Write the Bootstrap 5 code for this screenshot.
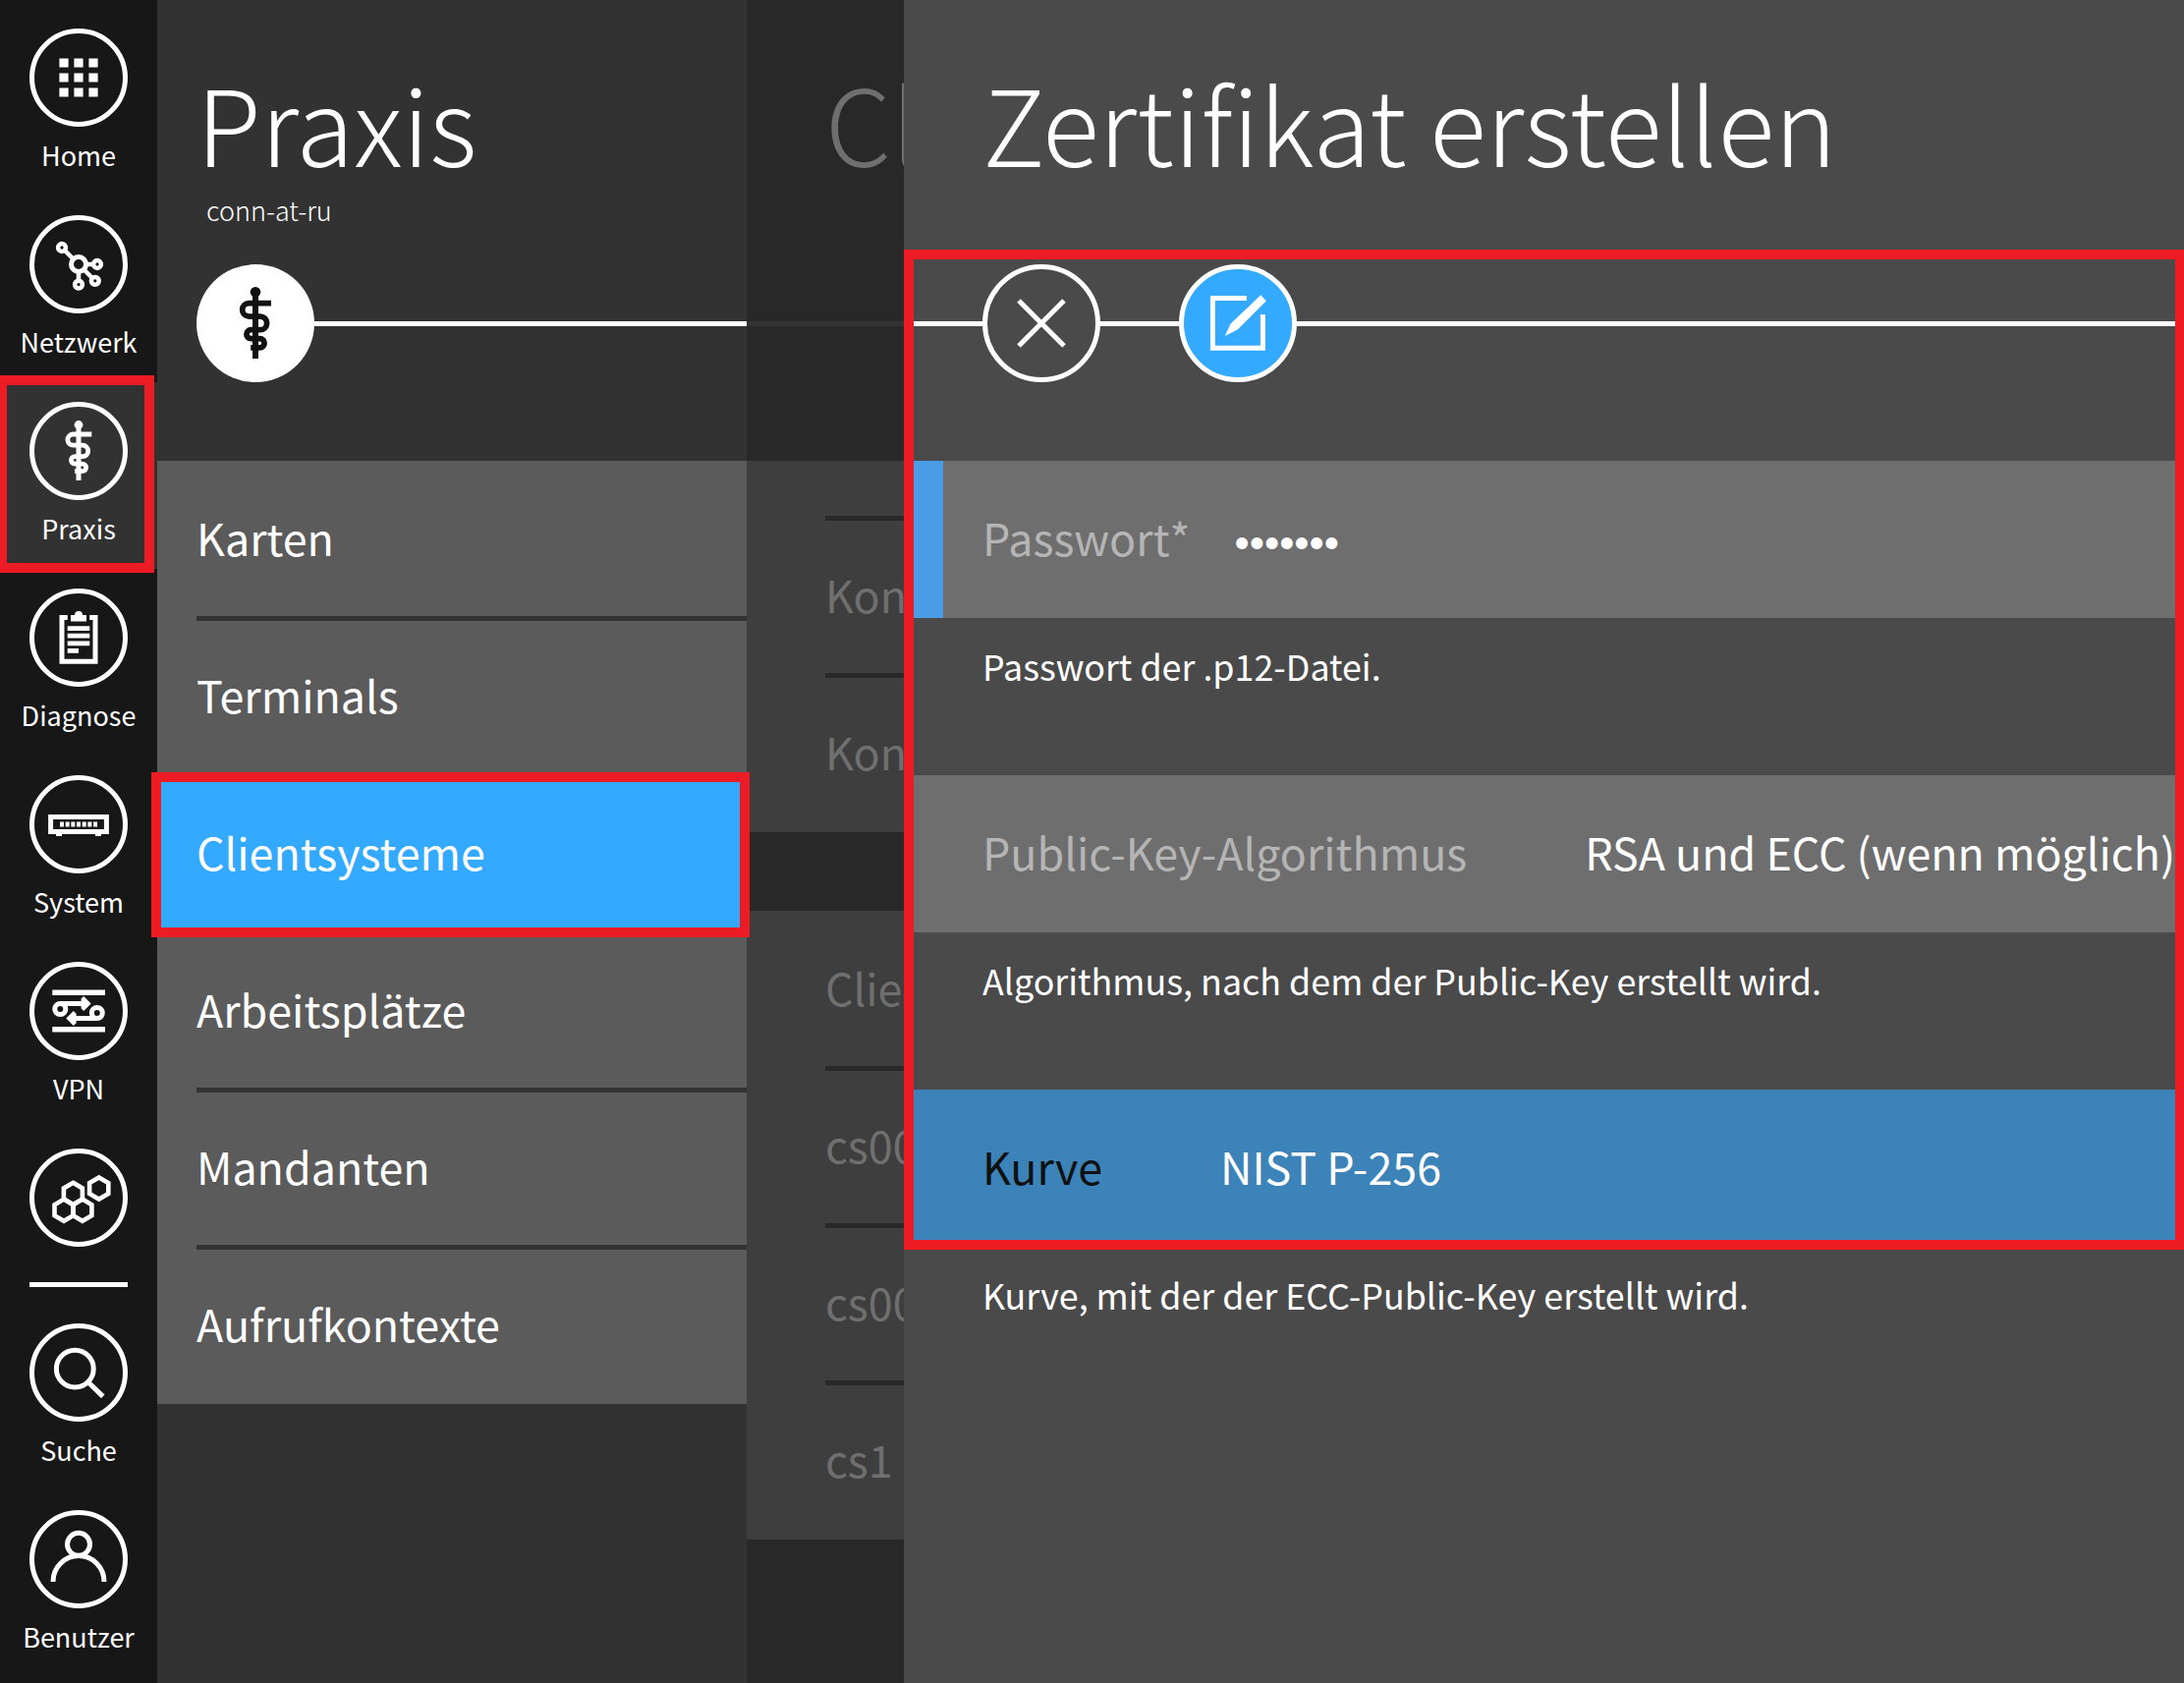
<!DOCTYPE html>
<html lang="de">
<head>
<meta charset="utf-8">
<meta name="viewport" content="width=device-width, initial-scale=1">
<title>Praxis – Zertifikat erstellen</title>
<link href="https://cdn.jsdelivr.net/npm/bootstrap@5.3.0/dist/css/bootstrap.min.css" rel="stylesheet">
<style>
  :root { --ink: #323232; --accent: #33a9ff; --mark-red: #ed1c24; }
  body { font-family: "Noto Sans CJK SC", "Noto Sans", sans-serif; background: #4a4a4a; color: #fff; font-variant-ligatures: none; }
  a { color: inherit; text-decoration: none; }
  .shell { width: 2223px; height: 1713px; }

  .side { width: 160px; padding-top: 9px; background: #171717; }
  .side-item { height: 190px; padding-top: 20px; }
  .side-item.active { background: var(--ink); }
  .side-item.nolabel { height: 156px; }
  .side-item svg { width: 100px; height: 100px; flex: none; }
  .side-label { font-size: 27px; line-height: 40px; margin-top: 9px; white-space: nowrap; }
  .side-rule { width: 100px; height: 5px; margin: 0 30px 17px; background: #fff; }
  .ico { fill: none; stroke: #fff; stroke-width: 5; }
  .ico .solid { fill: #fff; stroke: none; }

  .pane { height: 1713px; }
  .pane-main { width: 600px; background: var(--ink); }
  .pane-back { width: 160px; background: #282828; color: #6f6f6f; }
  .pane-form { background: #4a4a4a; min-width: 0; }
  .pane-head { height: 469px; padding-top: 64px; }
  .pane-title { font-size: 107.2px; line-height: 120px; font-weight: 200; margin: 0; padding-left: 80px; white-space: nowrap; }
  .pane-main .pane-title { padding-left: 40px; }
  .pane-sub { font-size: 27px; line-height: 40px; height: 40px; margin-top: 10px; padding-left: 50px; font-weight: 200; }
  .tools { height: 120px; margin-top: 35px; }
  .tools svg { width: 120px; height: 120px; flex: none; }
  .pane-badge { margin-left: 40px; color: #111; }
  .tool-line { height: 5px; margin-top: 1px; background: #fff; }
  .tool-gap { width: 80px; }

  .entry { height: 160px; font-size: 44.8px; line-height: 155px; white-space: nowrap; }
  .entries { background: #5b5b5b; }
  .entries .entry { padding-left: 40px; }
  .entries .entry.active { background: var(--accent); }
  .entry-rule { height: 5px; margin: -2px 0 -3px 40px; background: var(--ink); position: relative; }
  .pane-back .entries { background: #3e3e3e; }
  .pane-back .entries .entry { padding-left: 80px; }
  .pane-back .entry-rule { margin-left: 80px; background: #282828; }
  .pane-back .tool-line { background: #333; }
  .scrolled { padding-top: 58px; margin-bottom: 80px; }

  .field { background: #6e6e6e; border-left: 40px solid #6e6e6e; padding-left: 40px; color: #b5b5b5; }
  .field.required { border-left-color: #4b9ce4; }
  .field.selected { background: #3b83b8; border-left-color: #3b83b8; color: #111; }
  .field-value { color: #fff; margin-left: 120px; }
  .dots { font-family: "Liberation Sans", sans-serif; font-size: 43.5px; line-height: 169px; margin-left: 45px; }
  .hint { height: 160px; padding: 24px 0 0 80px; font-size: 35.85px; line-height: 48px; white-space: nowrap; }

  /* callout frames laid over the interface */
  .frame { position: absolute; border: 10px solid var(--mark-red); pointer-events: none; }
  .frame-nav { left: -3px; top: 382px; width: 160px; height: 201px; }
  .frame-entry { left: 154px; top: 786px; width: 609px; height: 168px; }
  .frame-form { left: 920px; top: 254px; width: 1303px; height: 1018px; border-right-width: 9px; }
</style>
<script src="https://cdn.jsdelivr.net/npm/bootstrap@5.3.0/dist/js/bootstrap.bundle.min.js"></script>
</head>
<body>
<svg class="d-none">
  <symbol id="staff" viewBox="0 0 100 100">
    <circle cx="50" cy="23.5" r="4.4" fill="currentColor" stroke="none"/>
    <path d="M50 23V80" fill="none" stroke="currentColor" stroke-width="5"/>
    <path d="M63.3 33H44.5a5.6 5.6 0 0 0 0 11.2H54a5.7 5.7 0 0 1 0 11.4H46.2a3.75 3.75 0 0 0 0 7.5H53.8a3.8 3.8 0 0 1 0 7.6H46" fill="none" stroke="currentColor" stroke-width="4.8"/>
  </symbol>
</svg>
<div class="shell d-flex position-relative overflow-hidden">

  <nav class="side d-flex flex-column flex-shrink-0">
    <a href="#" class="side-item d-flex flex-column align-items-center">
      <svg class="ico" viewBox="0 0 100 100"><circle cx="50" cy="50" r="47.5"/><path class="solid" d="M30.4 30.4h9.2v9.2h-9.2zM45.4 30.4h9.2v9.2h-9.2zM60.4 30.4h9.2v9.2h-9.2zM30.4 45.4h9.2v9.2h-9.2zM45.4 45.4h9.2v9.2h-9.2zM60.4 45.4h9.2v9.2h-9.2zM30.4 60.4h9.2v9.2h-9.2zM45.4 60.4h9.2v9.2h-9.2zM60.4 60.4h9.2v9.2h-9.2z"/></svg>
      <span class="side-label">Home</span>
    </a>
    <a href="#" class="side-item d-flex flex-column align-items-center">
      <svg class="ico" viewBox="0 0 100 100"><circle cx="50" cy="50" r="47.5"/><circle cx="50" cy="50" r="7.5"/><g stroke-width="4.5"><circle cx="33" cy="33" r="3.9"/><circle cx="69" cy="50" r="3.9"/><circle cx="66.8" cy="66.8" r="3.9"/><circle cx="50" cy="70.6" r="3.9"/><path d="M36 36l8.5 8.5M57 50h8M55.5 55.5l8 8M50 57v10"/></g></svg>
      <span class="side-label">Netzwerk</span>
    </a>
    <a href="#" class="side-item active d-flex flex-column align-items-center">
      <svg class="ico" viewBox="0 0 100 100"><circle cx="50" cy="50" r="47.5"/><use href="#staff" width="100" height="100"/></svg>
      <span class="side-label">Praxis</span>
    </a>
    <a href="#" class="side-item d-flex flex-column align-items-center">
      <svg class="ico" viewBox="0 0 100 100"><circle cx="50" cy="50" r="47.5"/><path d="M38.8 29.5H33V74.2H67V29.5H61.2"/><path class="solid" d="M42 27h4a4 4 0 0 1 8 0h4v6.4H42z"/><path stroke-width="4.8" d="M38.7 40.7H61.3M38.7 48.2H61.3M38.7 55.8H61.3M38.7 63.3H50"/></svg>
      <span class="side-label">Diagnose</span>
    </a>
    <a href="#" class="side-item d-flex flex-column align-items-center">
      <svg class="ico" viewBox="0 0 100 100"><circle cx="50" cy="50" r="47.5"/><path d="M21.6 42.5H78.4V57.5H21.6z"/><path stroke-dasharray="4 1.67" d="M31 50H69.3"/><path class="solid" d="M27 60h6v2h-6zM67 60h6v2h-6z"/></svg>
      <span class="side-label">System</span>
    </a>
    <a href="#" class="side-item d-flex flex-column align-items-center">
      <svg class="ico" viewBox="0 0 100 100"><circle cx="50" cy="50" r="47.5"/><path d="M23.3 31.2H77M23.3 68.8H77" stroke-width="5.4"/><circle cx="31.3" cy="48" r="5.5"/><circle cx="68.8" cy="52" r="5.5"/><path d="M31.3 42.5H55M68.8 57.5H45"/><path class="solid" d="M62.7 42.5L55.2 35 52.6 37.6V47.4L55.2 50zM37.3 57.5L44.8 50 47.6 52.8V62.2L44.8 65z"/></svg>
      <span class="side-label">VPN</span>
    </a>
    <a href="#" class="side-item nolabel d-flex flex-column align-items-center">
      <svg class="ico" viewBox="0 0 100 100"><circle cx="50" cy="50" r="47.5"/><g stroke-width="4.6"><path d="M44.4 34.8l9.5 5.6v11l-9.5 5.6-9.5-5.6v-11z"/><path d="M35 51.6l9.5 5.6v11l-9.5 5.6-9.5-5.6v-11z"/><path d="M53.9 51.6l9.5 5.6v11l-9.5 5.6-9.5-5.6v-11z"/><path d="M70.7 29.4l9.6 5.6v11l-9.6 5.6-9.6-5.6v-11z"/></g></svg>
    </a>
    <div class="side-rule"></div>
    <a href="#" class="side-item d-flex flex-column align-items-center">
      <svg class="ico" viewBox="0 0 100 100"><circle cx="50" cy="50" r="47.5"/><circle cx="46.3" cy="46.2" r="18.9"/><path d="M60 60L74.8 74.4"/></svg>
      <span class="side-label">Suche</span>
    </a>
    <a href="#" class="side-item d-flex flex-column align-items-center">
      <svg class="ico" viewBox="0 0 100 100"><circle cx="50" cy="50" r="47.5"/><circle cx="50" cy="34.8" r="11.5"/><path d="M24 73a26 26.4 0 0 1 52 0"/></svg>
      <span class="side-label">Benutzer</span>
    </a>
  </nav>

  <section class="pane pane-main flex-shrink-0">
    <header class="pane-head">
      <h1 class="pane-title">Praxis</h1>
      <div class="pane-sub">conn-at-ru</div>
      <div class="tools d-flex align-items-center">
        <svg class="pane-badge" viewBox="0 0 100 100"><circle cx="50" cy="50" r="50" fill="#fff"/><use href="#staff" width="100" height="100"/></svg>
        <div class="tool-line flex-grow-1"></div>
      </div>
    </header>
    <div class="entries">
      <div class="entry">Karten</div>
      <div class="entry-rule"></div>
      <div class="entry">Terminals</div>
      <div class="entry active">Clientsysteme</div>
      <div class="entry">Arbeitsplätze</div>
      <div class="entry-rule"></div>
      <div class="entry">Mandanten</div>
      <div class="entry-rule"></div>
      <div class="entry">Aufrufkontexte</div>
    </div>
  </section>

  <section class="pane pane-back flex-shrink-0 overflow-hidden">
    <header class="pane-head">
      <h2 class="pane-title">Cl</h2>
      <div class="pane-sub"></div>
      <div class="tools d-flex align-items-center"><div class="tool-line flex-grow-1"></div></div>
    </header>
    <div class="entries scrolled">
      <div class="entry-rule"></div>
      <div class="entry">Kon</div>
      <div class="entry-rule"></div>
      <div class="entry">Kon</div>
    </div>
    <div class="entries">
      <div class="entry">Clie</div>
      <div class="entry-rule"></div>
      <div class="entry">cs00</div>
      <div class="entry-rule"></div>
      <div class="entry">cs00</div>
      <div class="entry-rule"></div>
      <div class="entry">cs1</div>
    </div>
  </section>

  <section class="pane pane-form flex-grow-1">
    <header class="pane-head">
      <h2 class="pane-title">Zertifikat erstellen</h2>
      <div class="pane-sub"></div>
      <div class="tools d-flex align-items-center">
        <div class="tool-line tool-gap"></div>
        <svg viewBox="0 0 120 120" fill="none" stroke="#fff" stroke-width="5"><circle cx="60" cy="60" r="57.5"/><path d="M37 37L83 83M83 37L37 83"/></svg>
        <div class="tool-line tool-gap"></div>
        <svg viewBox="0 0 120 120" fill="none" stroke="#fff" stroke-width="5"><circle cx="60" cy="60" r="57.5" fill="#33a9ff"/><path d="M69 34.5H34.4V85.3H85.4V51"/><path fill="#fff" stroke="none" d="M46.8 73L52.6 60.6 83.2 31.2 88.8 37.3 59.6 66.6z"/></svg>
        <div class="tool-line flex-grow-1"></div>
      </div>
    </header>
    <div class="entry field required d-flex"><span>Passwort*</span><span class="field-value dots">•••••••</span></div>
    <div class="hint">Passwort der .p12-Datei.</div>
    <div class="entry field d-flex"><span>Public-Key-Algorithmus</span><span class="field-value">RSA und ECC (wenn möglich)</span></div>
    <div class="hint">Algorithmus, nach dem der Public-Key erstellt wird.</div>
    <div class="entry field selected d-flex"><span>Kurve</span><span class="field-value">NIST P-256</span></div>
    <div class="hint">Kurve, mit der der ECC-Public-Key erstellt wird.</div>
  </section>

  <div class="frame frame-nav"></div>
  <div class="frame frame-entry"></div>
  <div class="frame frame-form"></div>
</div>
</body>
</html>
